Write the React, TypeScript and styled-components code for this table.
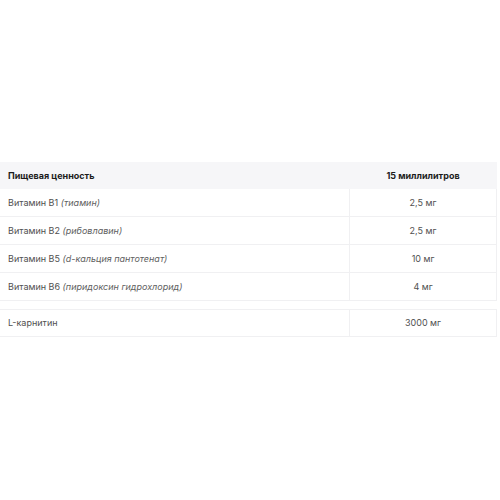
import React from 'react';
import styled, { createGlobalStyle } from 'styled-components';

const Global = createGlobalStyle`
  html, body {
    margin: 0;
    padding: 0;
    background: #fff;
  }
  body {
    font-family: Inter, "Noto Sans", sans-serif;
  }
`

const Page = styled.div`
  width: 500px;
  height: 500px;
  padding-top: 162px;
  box-sizing: border-box;
`

const Table = styled.table`
  width: 497px;
  border-collapse: collapse;
  font-size: 9px;
  color: #505050;
`

const HeadRow = styled.tr`
  background: #f6f6f8;
  height: 27px;
`

const HeadCell = styled.th<{ $center?: boolean }>`
  font-weight: 700;
  color: #1c1c1c;
  text-align: ${p => (p.$center ? 'center' : 'left')};
  padding: 0 8px;
  border: none;
`

const Row = styled.tr`
  height: 27.75px;
  border-bottom: 1px solid #f0f0f2;
`

const Cell = styled.td<{ $center?: boolean }>`
  padding: 0 8px;
  text-align: ${p => (p.$center ? 'center' : 'left')};
  border-right: 1px solid #f0f0f2;
  width: ${p => (p.$center ? '130px' : '333px')};
`

const Note = styled.em`
  font-style: italic;
  color: #606060;
`

const Gap = styled.tr`
  height: 9px;
  border-bottom: 1px solid #f0f0f2;
`

const rows = [
  ['Витамин В1', 'тиамин', '2,5 мг'],
  ['Витамин В2', 'рибовлавин', '2,5 мг'],
  ['Витамин В5', 'd-кальция пантотенат', '10 мг'],
  ['Витамин В6', 'пиридоксин гидрохлорид', '4 мг'],
]

const App: React.FC = () => {
  return (
    <Page>
      <Global />
      <Table>
        <tbody>
          <HeadRow>
            <HeadCell>Пищевая ценность</HeadCell>
            <HeadCell $center>15 миллилитров</HeadCell>
          </HeadRow>
          {rows.map(([name, note, value]) => (
            <Row key={name}>
              <Cell>
                {name} <Note>({note})</Note>
              </Cell>
              <Cell $center>{value}</Cell>
            </Row>
          ))}
          <Gap>
            <td colSpan={2}></td>
          </Gap>
          <Row>
            <Cell>L-карнитин</Cell>
            <Cell $center>3000 мг</Cell>
          </Row>
        </tbody>
      </Table>
    </Page>
  )
}

export default App
